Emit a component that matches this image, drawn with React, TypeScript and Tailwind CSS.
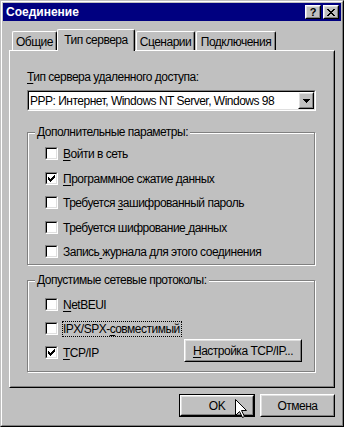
import React from "react";

// Пиксельные глифы в духе Windows 98
const CHECK = ["......x", ".....xx", "x...xxx", "xx.xxx.", "xxxxx..", ".xxx...", "..x...."];
const CLOSE = ["xx....xx", ".xx..xx.", "..xxxx..", "...xx...", "..xxxx..", ".xx..xx.", "xx....xx"];
const ARROW = ["xxxxxxx", ".xxxxx.", "..xxx..", "...x..."];

function Pixels({ rows }: { rows: string[] }) {
  return (
    <svg width={rows[0].length} height={rows.length} shapeRendering="crispEdges" className="block">
      {rows.flatMap((r, y) =>
        r.split("").map((c, x) => (c === "x" ? <rect key={`${x}-${y}`} x={x} y={y} width={1} height={1} fill="#000" /> : null))
      )}
    </svg>
  );
}

// Подчёркнутая буква-мнемоника
function Mn({ text, at }: { text: string; at: number }) {
  return (
    <>
      {text.slice(0, at)}
      <span className="underline underline-offset-2">{text[at]}</span>
      {text.slice(at + 1)}
    </>
  );
}

function Raised({ className = "", children }: { className?: string; children?: React.ReactNode }) {
  return (
    <div className={`border border-t-white border-l-white border-r-black border-b-black bg-[#c0c0c0] ${className}`}>
      <div className="w-full h-full border border-t-[#dfdfdf] border-l-[#dfdfdf] border-r-[#808080] border-b-[#808080] flex items-center justify-center">
        {children}
      </div>
    </div>
  );
}

function Checkbox({ checked }: { checked?: boolean }) {
  return (
    <span className="w-[13px] h-[13px] shrink-0 border border-t-[#808080] border-l-[#808080] border-r-white border-b-white flex">
      <span className="flex-1 border border-t-black border-l-black border-r-[#dfdfdf] border-b-[#dfdfdf] bg-white flex items-center justify-center">
        {checked && <Pixels rows={CHECK} />}
      </span>
    </span>
  );
}

function CheckRow({ label, at, checked, className = "" }: { label: string; at: number; checked?: boolean; className?: string }) {
  return (
    <div className={`flex items-center h-[13px] ${className}`}>
      <Checkbox checked={checked} />
      <span className="ml-[5px] leading-[14px] whitespace-nowrap">
        <Mn text={label} at={at} />
      </span>
    </div>
  );
}

function GroupBox({ title, className = "", children }: { title: string; className?: string; children: React.ReactNode }) {
  return (
    <div className={`relative w-[288px] border border-[#808080] shadow-[inset_1px_1px_0_#fff,1px_1px_0_#fff] ${className}`}>
      <span className="absolute -top-[8px] left-[7px] px-[2px] bg-[#c0c0c0] leading-[14px] whitespace-nowrap">{title}</span>
      {children}
    </div>
  );
}

const tabs = [
  { label: "Общие", w: "w-[45px]", active: false },
  { label: "Тип сервера", w: "w-[78px]", active: true },
  { label: "Сценарии", w: "w-[59px] ml-[1px]", active: false },
  { label: "Подключения", w: "w-[80px] ml-[1px]", active: false },
];

export default function App() {
  return (
    <div className="w-[344px] h-[427px] bg-[#c0c0c0] text-black text-[12px] tracking-[-0.5px] font-['Liberation_Sans',Arial,sans-serif] relative overflow-hidden">
      {/* Рамка окна */}
      <div className="w-full h-full border border-t-[#c0c0c0] border-l-[#c0c0c0] border-r-black border-b-black">
        <div className="w-full h-full border border-t-white border-l-white border-r-[#808080] border-b-[#808080] p-px flex flex-col">
          {/* Заголовок */}
          <div className="h-[18px] bg-[#000080] flex items-center pl-[3px] pr-[2px] shrink-0">
            <span className="text-white font-bold text-[12px] tracking-normal leading-none">Соединение</span>
            <div className="ml-auto flex gap-[2px]">
              <Raised className="w-[16px] h-[14px]">
                <span className="font-bold text-[11px] tracking-normal leading-none">?</span>
              </Raised>
              <Raised className="w-[16px] h-[14px]">
                <Pixels rows={CLOSE} />
              </Raised>
            </div>
          </div>

          {/* Вкладки */}
          <div className="mx-[6px] h-[29px] flex items-end pl-[3px] shrink-0">
            {tabs.map((t) =>
              t.active ? (
                <div
                  key={t.label}
                  className={`${t.w} h-[22px] -mb-px relative z-10 bg-[#c0c0c0] border-t border-l border-r border-t-white border-l-white border-r-black rounded-t-[2px] shadow-[inset_-1px_0_0_#808080] flex items-start justify-center pt-[3px] leading-[14px]`}
                >
                  {t.label}
                </div>
              ) : (
                <div
                  key={t.label}
                  className={`${t.w} h-[19px] bg-[#c0c0c0] border-t border-l border-r border-t-white border-l-white border-r-black rounded-t-[2px] shadow-[inset_-1px_0_0_#808080] flex items-start justify-center pt-[3px] leading-[14px]`}
                >
                  {t.label}
                </div>
              )
            )}
          </div>

          {/* Панель вкладки */}
          <div className="mx-[6px] h-[338px] shrink-0 border border-t-white border-l-white border-r-black border-b-black">
            <div className="w-full h-full border border-t-[#c0c0c0] border-l-[#c0c0c0] border-r-[#808080] border-b-[#808080] pl-[16px] pt-[18px]">
              <div className="leading-[14px] h-[14px]">
                <Mn text="Тип сервера удаленного доступа:" at={0} />
              </div>

              <div className="mt-[6px] w-[289px] h-[21px] border border-t-[#808080] border-l-[#808080] border-r-white border-b-white">
                <div className="w-full h-full border border-t-black border-l-black border-r-[#dfdfdf] border-b-[#dfdfdf] bg-white flex items-center">
                  <span className="pl-[1px] leading-[14px] whitespace-nowrap">PPP: Интернет, Windows NT Server, Windows 98</span>
                  <Raised className="ml-auto w-[16px] h-[17px]">
                    <Pixels rows={ARROW} />
                  </Raised>
                </div>
              </div>

              <GroupBox title="Дополнительные параметры:" className="mt-[21px] h-[133px] pl-[17px] pt-[14px]">
                <CheckRow label="Войти в сеть" at={0} />
                <CheckRow label="Программное сжатие данных" at={0} checked className="mt-[12px]" />
                <CheckRow label="Требуется зашифрованный пароль" at={10} className="mt-[11px]" />
                <CheckRow label="Требуется шифрование данных" at={20} className="mt-[12px]" />
                <CheckRow label="Запись журнала для этого соединения" at={6} className="mt-[11px]" />
              </GroupBox>

              <GroupBox title="Допустимые сетевые протоколы:" className="mt-[15px] h-[92px] pl-[17px] pt-[17px]">
                <CheckRow label="NetBEUI" at={0} />
                <div className="flex items-center h-[13px] mt-[11px]">
                  <Checkbox />
                  <span className="ml-[4px] h-[16px] border border-dotted border-black flex items-center leading-[14px] whitespace-nowrap pr-px">
                    <Mn text="IPX/SPX-совместимый" at={8} />
                  </span>
                </div>
                <div className="flex items-center h-[13px] mt-[11px] pr-[12px]">
                  <Checkbox checked />
                  <span className="ml-[5px] leading-[14px]">
                    <Mn text="TCP/IP" at={0} />
                  </span>
                  <Raised className="ml-auto self-start -mt-[7px] w-[118px] h-[23px]">
                    <span className="leading-[14px] whitespace-nowrap">
                      <Mn text="Настройка TCP/IP..." at={0} />
                    </span>
                  </Raised>
                </div>
              </GroupBox>
            </div>
          </div>

          {/* Кнопки диалога */}
          <div className="mt-[6px] mr-[6px] flex justify-end gap-[5px] shrink-0">
            <div className="w-[76px] h-[23px] border border-black">
              <Raised className="w-full h-full">
                <span className="leading-[14px]">OK</span>
              </Raised>
            </div>
            <Raised className="w-[75px] h-[23px]">
              <span className="leading-[14px]">Отмена</span>
            </Raised>
          </div>
        </div>
      </div>

      {/* Курсор мыши */}
      <svg className="absolute left-[235px] top-[399px]" width="13" height="20" viewBox="0 0 13 20">
        <path d="M0.5 0.5 L0.5 16.5 L4.5 12.5 L7.5 18.5 L9.5 17.5 L6.5 11.5 L11.5 11.5 Z" fill="#fff" stroke="#000" strokeWidth="1" />
      </svg>
    </div>
  );
}
